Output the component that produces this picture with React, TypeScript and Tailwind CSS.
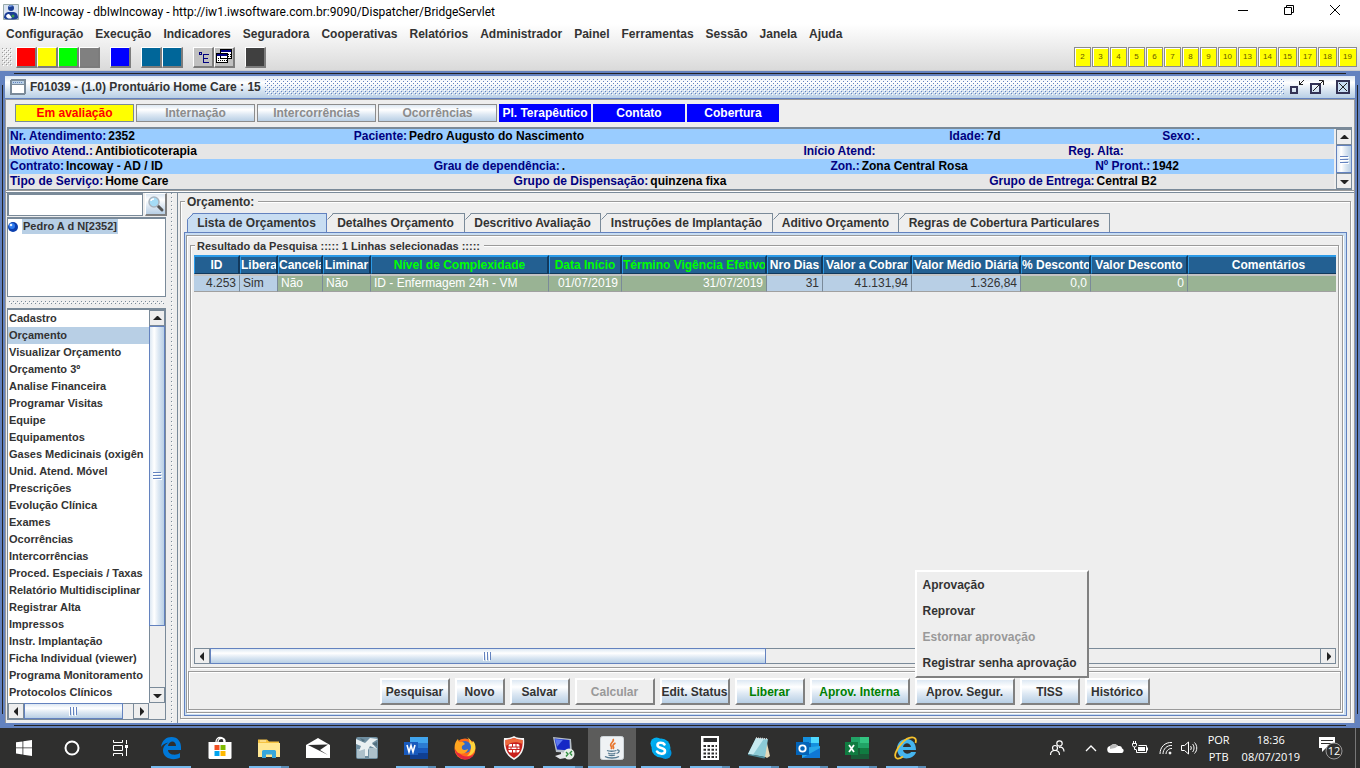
import { useState } from 'react';
import type { ReactNode } from 'react';

const metal = 'bg-[linear-gradient(to_bottom,#dde8f3,#fff_30%,#dde8f3_60%,#b8cfe5)]';
const metalSide = 'bg-[linear-gradient(to_right,#dde8f3,#fff_30%,#dde8f3_60%,#b8cfe5)]';
const etched = 'border border-[#9a9a9a] shadow-[1px_1px_0_#fff,inset_1px_1px_0_#fff]';

const menus = [
  'Configuração', 'Execução', 'Indicadores', 'Seguradora', 'Cooperativas', 'Relatórios',
  'Administrador', 'Painel', 'Ferramentas', 'Sessão', 'Janela', 'Ajuda',
];

const badges = [2, 3, 4, 5, 6, 7, 8, 9, 10, 13, 14, 15, 17, 18, 19];

const infoRows = [
  {
    cols: 'grid-cols-[344fr_596fr_213fr_172fr] bg-[#99ccff]',
    items: [['Nr. Atendimento:', '2352'], ['Paciente:', 'Pedro Augusto do Nascimento'], ['Idade:', '7d'], ['Sexo:', '.']],
  },
  {
    cols: 'grid-cols-[794fr_265fr_266fr] bg-[#e6e6e6]',
    items: [['Motivo Atend.:', 'Antibioticoterapia'], ['Início Atend:', ''], ['Reg. Alta:', '']],
  },
  {
    cols: 'grid-cols-[424fr_397fr_265fr_239fr] bg-[#99ccff]',
    items: [['Contrato:', 'Incoway - AD / ID'], ['Grau de dependência:', '.'], ['Zon.:', 'Zona Central Rosa'], ['Nº Pront.:', '1942']],
  },
  {
    cols: 'grid-cols-[504fr_476fr_345fr] bg-[#e6e6e6]',
    items: [['Tipo de Serviço:', 'Home Care'], ['Grupo de Dispensação:', 'quinzena fixa'], ['Grupo de Entrega:', 'Central B2']],
  },
];

const sections = [
  'Cadastro', 'Orçamento', 'Visualizar Orçamento', 'Orçamento 3º', 'Analise Financeira', 'Programar Visitas',
  'Equipe', 'Equipamentos', 'Gases Medicinais (oxigên', 'Unid. Atend. Móvel', 'Prescrições', 'Evolução Clínica',
  'Exames', 'Ocorrências', 'Intercorrências', 'Proced. Especiais / Taxas', 'Relatório Multidisciplinar',
  'Registrar Alta', 'Impressos', 'Instr. Implantação', 'Ficha Individual (viewer)', 'Programa Monitoramento',
  'Protocolos Clínicos',
];

const tabs = [
  { name: 'Lista de Orçamentos', width: 'w-[140px]' },
  { name: 'Detalhes Orçamento', width: 'w-[138px]' },
  { name: 'Descritivo Avaliação', width: 'w-[136px]' },
  { name: 'Instruções de Implantação', width: 'w-[172px]' },
  { name: 'Aditivo Orçamento', width: 'w-[126px]' },
  { name: 'Regras de Cobertura Particulares', width: 'w-[211px]' },
];

const columns = [
  { name: 'ID', width: 'w-[46px]', value: '4.253', right: true, blue: true },
  { name: 'Libera', width: 'w-[38px]', value: 'Sim', blue: true },
  { name: 'Cancela', width: 'w-[45px]', value: 'Não' },
  { name: 'Liminar', width: 'w-[48px]', value: 'Não' },
  { name: 'Nível de Complexidade', width: 'w-[178px]', value: 'ID - Enfermagem 24h - VM', green: true },
  { name: 'Data Início', width: 'w-[73px]', value: '01/07/2019', right: true, green: true },
  { name: 'Término Vigência Efetivo', width: 'w-[145px]', value: '31/07/2019', right: true, green: true },
  { name: 'Nro Dias', width: 'w-[56px]', value: '31', right: true, blue: true },
  { name: 'Valor a Cobrar', width: 'w-[89px]', value: '41.131,94', right: true, blue: true },
  { name: 'Valor Médio Diária', width: 'w-[109px]', value: '1.326,84', right: true, blue: true },
  { name: '% Desconto', width: 'w-[70px]', value: '0,0', right: true },
  { name: 'Valor Desconto', width: 'w-[97px]', value: '0', right: true },
  { name: 'Comentários', width: '', value: '' },
];

// dotted grip used on title bars and dividers
function Bumps({ id, color }: { id: string; color: string }) {
  return (
    <svg className="block h-full w-full" shapeRendering="crispEdges" aria-hidden="true">
      <defs>
        <pattern id={id} width="4" height="4" patternUnits="userSpaceOnUse">
          <rect width="1" height="1" fill={color} />
          <rect x="1" y="1" width="1" height="1" fill="#fff" />
          <rect x="2" y="2" width="1" height="1" fill={color} />
          <rect x="3" y="3" width="1" height="1" fill="#fff" />
        </pattern>
      </defs>
      <rect width="100%" height="100%" fill={`url(#${id})`} />
    </svg>
  );
}

const arrows = { up: 'M0 6 4 2h1l4 4z', down: 'M0 3h9L5 7H4z', left: 'M6 0v9L2 5V4z', right: 'M3 0v9l4-4V4z' };

function ArrowButton({ dir }: { dir: keyof typeof arrows }) {
  return (
    <button aria-label={dir} className="flex size-4 shrink-0 items-center justify-center border border-[#7a8a99] bg-[#eee]">
      <svg width="9" height="9" fill="#222"><path d={arrows[dir]} /></svg>
    </button>
  );
}

function Grip({ side }: { side?: boolean }) {
  return (
    <svg width="9" height="9" className={side ? '' : 'rotate-90'} shapeRendering="crispEdges">
      <path d="M0 1.500h8M0 4.500h8M0 7.500h8" stroke="#6382bf" />
      <path d="M1 2.500h8M1 5.500h8M1 8.500h8" stroke="#fff" />
    </svg>
  );
}

function ToolButton({ color, label, children }: { color: string; label: string; children?: ReactNode }) {
  return (
    <button aria-label={label} className={`flex size-[21px] items-center justify-center border-t border-r-2 border-b-2 border-l border-t-white border-r-[#7c7c7c] border-b-[#7c7c7c] border-l-white ${color}`}>
      {children}
    </button>
  );
}

function ActionButton({ width, className = 'text-[#333]', disabled, children }: { width: string; className?: string; disabled?: boolean; children: ReactNode }) {
  return (
    <button
      disabled={disabled}
      className={`h-[27px] whitespace-nowrap border-2 border-t-white border-l-white border-r-[#808080] border-b-[#808080] ${disabled ? 'bg-[#eee]' : metal} ${width} ${className}`}
    >
      {children}
    </button>
  );
}

function EtchedBox({ title, className, children }: { title: string; className: string; children: ReactNode }) {
  return (
    <section className={`relative flex min-h-0 min-w-0 flex-1 flex-col ${etched} ${className}`}>
      <h2 className="absolute -top-2 left-1 bg-[#eee] px-0.5 pr-1 leading-4">{title}</h2>
      {children}
    </section>
  );
}

function TitleBar() {
  return (
    <header className="flex h-6 items-center bg-white pl-[3px]">
      <svg width="16" height="16" viewBox="0 0 16 16">
        <path fill="#d9e3f2" stroke="#9aa" d="M.5.5h15v15H.5z" />
        <circle cx="8" cy="4" r="3" fill="#1c3f95" />
        <path fill="#1c3f95" d="M1 14c0-4 2-6 5-6h4c3 0 5 2 5 6-1 2-13 2-14 0z" />
        <path fill="#fff" d="M3 12c2-3 3-2 4-1l2 3c-2 1-5 1-6-2z" />
        <circle cx="10" cy="12" r="1.5" fill="#3c9b4a" />
        <path fill="#8fb5ef" d="M6 3c0-2 3-2 4-1z" />
      </svg>
      <h1 className="ml-1 flex-1 font-[Roboto,sans-serif] text-xs font-normal text-black">
        IW-Incoway - dbIwIncoway - http://iw1.iwsoftware.com.br:9090/Dispatcher/BridgeServlet
      </h1>
      <div className="mr-0.5 flex pb-1">
        {['M1 6.500h10', 'M1.500 3.500h7v7h-7zM3.500 3.500v-2h7v7h-2', 'M1 1l10 10M11 1 1 11'].map((d, i) => (
          <button key={d} aria-label={['Minimizar', 'Restaurar', 'Fechar'][i]} className="flex h-5 w-[46px] items-center justify-center">
            <svg width="12" height="12" fill="none" stroke="#000"><path d={d} /></svg>
          </button>
        ))}
      </div>
    </header>
  );
}

function ToolBar() {
  return (
    <div className="flex h-[26px] items-center gap-2.5 pr-[3px] pl-0.5">
      <div className="flex items-center gap-1">
        <div className="h-[18px] w-2.5"><Bumps id="grip-toolbar" color="#999" /></div>
        <div className="flex">
          <ToolButton label="Vermelho" color="bg-[#ff0000]" />
          <ToolButton label="Amarelo" color="bg-[#ffff00]" />
          <ToolButton label="Verde" color="bg-[#00ff00]" />
          <ToolButton label="Cinza" color="bg-[#808080]" />
        </div>
      </div>
      <ToolButton label="Azul" color="bg-[#0000ff]" />
      <div className="flex">
        <ToolButton label="Anterior" color="bg-[#006699]" />
        <ToolButton label="Próximo" color="bg-[#006699]" />
      </div>
      <div className="flex">
        <ToolButton label="Árvore" color="bg-[#c0c0c0]">
          <svg width="14" height="14" fill="none" stroke="#000080" shapeRendering="crispEdges">
            <path d="M3.500 2.500h2v2h-2zM7.500 4v9M7.500 4.500h5M7.500 8.500h4M7.500 12.500h5" />
          </svg>
        </ToolButton>
        <ToolButton label="Janelas" color="bg-[#c0c0c0]">
          <svg width="16" height="15" shapeRendering="crispEdges">
            <path fill="#fff" stroke="#000" d="M4.500.5h11v9h-11zM.500 4.500h11v9H.500z" />
            <path fill="#000080" d="M5 1h10v2H5zM1 5h10v2H1z" />
            <path stroke="#000" strokeDasharray="1 1" d="M2 9.500h9M2 11.500h9M12 5.500h3M12 7.500h3" />
          </svg>
        </ToolButton>
      </div>
      <ToolButton label="Sair" color="bg-[#404040]" />
      <div className="ml-auto flex gap-px">
        {badges.map((n) => (
          <button key={n} className={`h-5 border border-[#8c8c8c] bg-[#ffff00] text-[8px] leading-4 font-normal text-[#665500] shadow-[inset_1px_1px_0_#fff] ${n > 9 ? 'w-[19px]' : 'w-[17px]'}`}>{n}</button>
        ))}
      </div>
    </div>
  );
}

function FrameTitle() {
  return (
    <div className={`flex h-[23px] items-center border-b border-[#6382bf] pr-1 pl-[5px] ${metal}`}>
      <svg width="16" height="16" shapeRendering="crispEdges">
        <rect x="1" y="1" width="14" height="14" rx="1" fill="#fff" stroke="#7a8a99" strokeWidth="2" />
        <path fill="#b8cfe5" d="M2 2h12v3H2z" />
        <path stroke="#7a8a99" d="M2 5.500h12" />
        <path stroke="#6382bf" strokeDasharray="1 1" d="M3 3.500h10" />
      </svg>
      <h2 className="mr-1 ml-1 whitespace-nowrap">F01039 - (1.0) Prontuário Home Care : 15</h2>
      <div className="h-4 flex-1"><Bumps id="grip-title" color="#6382bf" /></div>
      <div className="flex gap-1 pl-1.5">
        <button aria-label="Minimizar janela">
          <svg width="16" height="16" fill="none" stroke="#222" shapeRendering="crispEdges">
            <path d="M1 8h6v6H1z" stroke="#335" strokeWidth="2" />
            <path d="M9 5.500h4M9.500 2v4M10 5l4-4" />
          </svg>
        </button>
        <button aria-label="Maximizar janela">
          <svg width="16" height="16" fill="none" stroke="#222">
            <path d="M1 5h9v9H1z" stroke="#335" strokeWidth="2" />
            <path d="M3 12l10-10M9 1.500h4.500V6" />
          </svg>
        </button>
        <button aria-label="Fechar janela" className="ml-1.5">
          <svg width="15" height="15" fill="#c8ddf2" stroke="#222">
            <path d="M1 1h12v12H1z" strokeWidth="2" stroke="#335" />
            <path d="M3 3l8 8M11 3l-8 8" />
          </svg>
        </button>
      </div>
    </div>
  );
}

function StatusRow() {
  return (
    <div className="flex gap-0.5 pt-1 pr-2 pb-[5px] pl-[9px]">
      <button className="h-[18px] w-[119px] border border-[#7a8a99] bg-[#ffff00] leading-4 text-[#ff0000]">Em avaliação</button>
      {['Internação', 'Intercorrências', 'Ocorrências'].map((name) => (
        <button key={name} className={`h-[18px] w-[119px] border border-[#8c8c8c] leading-4 text-[#8c8c8c] ${metal}`}>{name}</button>
      ))}
      {['Pl. Terapêutico', 'Contato', 'Cobertura'].map((name) => (
        <button key={name} className="h-[18px] w-[92px] whitespace-nowrap bg-[#0000ff] leading-4 text-white">{name}</button>
      ))}
    </div>
  );
}

function PatientInfo() {
  return (
    <div className="mr-0.5 ml-px flex border-t-2 border-b border-l-2 border-[#7a8a99]">
      <div className="min-w-0 flex-1 text-black">
        {infoRows.map((row) => (
          <dl key={row.cols} className={`grid h-[15px] pl-px leading-[15px] whitespace-nowrap ${row.cols}`}>
            {row.items.map(([label, value]) => (
              <div key={label} className="flex gap-0.5">
                <dt className="text-[#000080]">{label}</dt>
                <dd>{value}</dd>
              </div>
            ))}
          </dl>
        ))}
      </div>
      <div className="ml-0.5 flex w-4 flex-col bg-[#eee]">
        <ArrowButton dir="up" />
        <div className={`flex flex-1 items-center justify-center border border-[#6382bf] ${metalSide}`}><Grip side /></div>
        <ArrowButton dir="down" />
      </div>
    </div>
  );
}

function Sidebar() {
  const [active, setActive] = useState('Orçamento');
  return (
    <aside className="flex w-[161px] shrink-0 flex-col pb-[3px] pl-px text-[11px]">
      <div className="flex gap-0.5">
        <input aria-label="Pesquisar paciente" className="h-[23px] min-w-0 flex-1 border border-t-2 border-l-2 border-[#7a8a99] bg-white px-1 outline-none" />
        <button aria-label="Buscar" className={`flex h-[23px] w-[22px] items-center justify-center border border-r-2 border-b-2 border-t-white border-r-[#808080] border-b-[#808080] border-l-white ${metal}`}>
          <svg width="18" height="18" fill="none">
            <path stroke="#555" strokeWidth="3" strokeLinecap="round" d="m11 11 4 4" />
            <circle cx="7" cy="7" r="5" fill="#a5dcf7" stroke="#a9b4bf" strokeWidth="1.500" />
            <path stroke="#fff" strokeWidth="1.500" d="M4 6c0-1 1-2 3-2" />
          </svg>
        </button>
      </div>
      <div className="mt-px mr-px h-20 border border-t-2 border-[#7a8a99] bg-white">
        <div className="flex items-center gap-[3px]">
          <svg width="11" height="12">
            <circle cx="5" cy="6" r="5" fill="#0b3fae" />
            <circle cx="4" cy="5" r="3" fill="#2f7cf0" />
            <circle cx="3" cy="4" r="1.300" fill="#e6f1ff" />
          </svg>
          <span className="bg-[#b8cfe5] px-px leading-[15px]">Pedro A d N[2352]</span>
        </div>
      </div>
      <div className="h-[11px] px-0.5 py-1"><Bumps id="grip-side" color="#7a8a99" /></div>
      <div className="mr-px flex min-h-0 flex-1 flex-col border border-t-2 border-[#7a8a99]">
        <div className="flex min-h-0 flex-1">
          <ul className="min-w-0 flex-1 overflow-hidden bg-white">
            {sections.map((name) => (
              <li key={name}>
                <button
                  onClick={() => setActive(name)}
                  className={`block h-[17px] w-full pl-px text-left leading-[17px] whitespace-nowrap ${name === active ? 'bg-[#b8cfe5]' : ''}`}
                >
                  {name}
                </button>
              </li>
            ))}
          </ul>
          <div className="flex w-4 flex-col bg-[#eee]">
            <ArrowButton dir="up" />
            <div className={`flex flex-[301] items-center justify-center border border-[#6382bf] ${metalSide}`}><Grip side /></div>
            <div className="flex-[62] border-l border-[#7a8a99]" />
            <ArrowButton dir="down" />
          </div>
        </div>
        <div className="flex h-4 bg-[#eee]">
          <ArrowButton dir="left" />
          <div className={`flex flex-[101] items-center justify-center border border-[#6382bf] ${metal}`}><Grip /></div>
          <div className="flex-[10] border-t border-[#7a8a99]" />
          <ArrowButton dir="right" />
          <div className="w-4" />
        </div>
      </div>
    </aside>
  );
}

function BudgetTable() {
  return (
    <div className="min-h-0 flex-1 overflow-hidden">
      <table className="w-full min-w-[1156px] table-fixed border-separate border-spacing-0 text-left">
        <thead>
          <tr>
            {columns.map((c) => (
              <th key={c.name} scope="col" className={`border border-t-2 border-r-2 border-t-[#2c9be8] border-r-[#12395c] border-b-[#12395c] border-l-[#2c9be8] bg-[#236092] p-0 text-center ${c.green ? 'text-[#00ff00]' : 'text-white'} ${c.width}`}>
                <div className="flex h-4 justify-center-safe overflow-hidden leading-4 whitespace-nowrap">{c.name}</div>
              </th>
            ))}
          </tr>
        </thead>
        <tbody>
          <tr>
            {columns.map((c) => (
              <td key={c.name} className={`h-[18px] overflow-hidden border-t-2 border-r border-b border-t-[#c4c4c4] border-r-[#7a8a99] border-b-[#a0a0a0] px-[3px] py-0 leading-[15px] font-normal whitespace-nowrap ${c.right ? 'text-right' : ''} ${c.blue ? 'bg-[#b8cfe5] text-[#333]' : 'bg-[#99b394] text-white'}`}>
                {c.value}
              </td>
            ))}
          </tr>
        </tbody>
      </table>
    </div>
  );
}

function ActionBar() {
  return (
    <div className={`mx-px mt-[3px] mb-0.5 flex justify-center gap-[5px] pt-1.5 pb-1 ${etched}`}>
      <ActionButton width="w-[70px]">Pesquisar</ActionButton>
      <ActionButton width="w-[50px]">Novo</ActionButton>
      <ActionButton width="w-[60px]">Salvar</ActionButton>
      <ActionButton width="w-[80px]" className="text-[#999]" disabled>Calcular</ActionButton>
      <ActionButton width="w-[70px]">Edit. Status</ActionButton>
      <ActionButton width="w-[70px]" className="text-[#008000]">Liberar</ActionButton>
      <ActionButton width="w-[100px]" className="text-[#008000]">Aprov. Interna</ActionButton>
      <div className="relative">
        <ActionButton width="w-[100px]">Aprov. Segur.</ActionButton>
        <menu className="absolute bottom-full left-0 z-10 w-[174px] border-2 border-t-white border-r-[#808080] border-b-[#808080] border-l-white bg-[#eee]">
          {['Aprovação', 'Reprovar', 'Estornar aprovação', 'Registrar senha aprovação'].map((name) => (
            <li key={name}>
              <button disabled={name.startsWith('Estornar')} className="block h-[26px] w-full pl-1.5 text-left whitespace-nowrap disabled:text-[#999]">{name}</button>
            </li>
          ))}
        </menu>
      </div>
      <ActionButton width="w-[60px]">TISS</ActionButton>
      <ActionButton width="w-[65px]">Histórico</ActionButton>
    </div>
  );
}

function BudgetPanel() {
  const [tab, setTab] = useState(tabs[0].name);
  return (
    <main className="flex min-w-0 flex-1 flex-col border-l border-[#7a8a99] pt-2 pr-[3px] pb-1 pl-0.5">
      <EtchedBox title="Orçamento:" className="px-[3px] pt-[11px] pb-0.5">
        <div role="tablist" className="flex pl-[3px]">
          {tabs.map((t) => {
            const on = t.name === tab;
            return (
              <button
                key={t.name}
                role="tab"
                aria-selected={on}
                onClick={() => setTab(t.name)}
                className={`relative h-[19px] border-t border-r whitespace-nowrap ${t.width} ${on ? 'border-[#6382bf] bg-[#c8ddf2]' : 'border-[#7a8a99]'}`}
              >
                <svg className="absolute -top-px left-0" width="7" height="19" fill="none">
                  <path fill="#eee" d="M0 0h6L0 6z" />
                  <path stroke={on ? '#6382bf' : '#7a8a99'} d={on ? 'M6.500.5l-6 6V19' : 'M6.500.5l-6 6'} />
                </svg>
                {t.name}
              </button>
            );
          })}
        </div>
        <div className="flex min-h-0 flex-1 flex-col border border-[#6382bf] bg-[#c8ddf2] pt-0.5 pr-[3px] pb-0.5 pl-px">
          <div className={`flex min-h-0 flex-1 flex-col bg-[#eee] ${etched}`}>
            <EtchedBox title="Resultado da Pesquisa ::::: 1 Linhas selecionadas :::::" className="mx-[3px] mt-[9px] pt-[9px] pr-0.5 pb-[3px] pl-[3px] [&>h2]:text-[11px]">
              <BudgetTable />
              <div className="flex h-4 border-t border-b border-[#7a8a99]">
                <div className="-my-px"><ArrowButton dir="left" /></div>
                <div className={`-my-px flex flex-[555] items-center justify-center border border-[#6382bf] ${metal}`}><Grip /></div>
                <div className="flex-[556]" />
                <div className="-my-px"><ArrowButton dir="right" /></div>
              </div>
            </EtchedBox>
            <ActionBar />
          </div>
        </div>
      </EtchedBox>
    </main>
  );
}

const apps: { name: string; state: 'idle' | 'open' | 'many' | 'active'; icon: ReactNode }[] = [
  {
    name: 'Edge', state: 'open',
    icon: <path fill="#0078d7" d="M2 11C3 4 7.500 1 12.500 1 19 1 22 6 22 11v3H9c0 5 8 6 12 3v4.500C15 25 4 23 4 14.500 4 11 6.500 8 9.500 6.500 5.500 7 3.500 9 2 11zM9 10h8c0-6-7-6-8 0z" />,
  },
  {
    name: 'Store', state: 'idle',
    icon: (
      <>
        <path fill="none" stroke="#fff" strokeWidth="1.300" d="M8 6c0-6 8-6 8 0M10 6c0-5 8-5 7 0" />
        <path fill="#fff" d="M.5 6h23v15.500a1.500 1.500 0 0 1-1.500 1.500H2A1.500 1.500 0 0 1 .5 21.500z" />
        <path fill="#f25022" d="M6.500 9h5v5h-5z" /><path fill="#7fba00" d="M12.500 9h5v5h-5z" />
        <path fill="#00a4ef" d="M6.500 15h5v5h-5z" /><path fill="#ffb900" d="M12.500 15h5v5h-5z" />
      </>
    ),
  },
  {
    name: 'Explorador', state: 'many',
    icon: (
      <>
        <path fill="#f5c242" d="M1 3.500h9l2 2h10v4H1z" /><path fill="#ffe793" d="M1 7h22v14H1z" />
        <path fill="#fff3c4" d="M3 4.500h6v1H3z" />
        <path fill="#35a7dc" d="M5 22v-6.500A1.500 1.500 0 0 1 6.500 14h11a1.500 1.500 0 0 1 1.500 1.500V22h-4v-3.500h-6V22z" />
      </>
    ),
  },
  {
    name: 'Email', state: 'idle',
    icon: <><path fill="#fff" d="M0 9 12 2l12 7v13H0z" /><path fill="#2d2d2d" d="m2 9 20-.5L14 14l8 5L2 9z" /></>,
  },
  {
    name: 'Imagem', state: 'idle',
    icon: (
      <>
        <rect x="1" y="1" width="22" height="22" rx="2" fill="#6f8ea0" />
        <path fill="#adc1cb" d="M2 13h8v9H2zM14 12h8v10h-8z" />
        <path fill="#e9f0f2" d="m1 3 9 4 5-5 8 1-6 4 5 6-7-3-2 4v6h-3v-7l-6 2 2-5-5-2z" />
        <path fill="#52707f" d="m5 2 5 2-2 2zM17 8l5-2v4z" />
      </>
    ),
  },
  {
    name: 'Word', state: 'many',
    icon: (
      <>
        <path fill="#41a5ee" d="M6 1h18v6H6z" /><path fill="#2b7cd3" d="M6 7h18v5H6z" />
        <path fill="#185abd" d="M6 12h18v6H6z" /><path fill="#103f91" d="M6 17h18v6H6z" />
        <path fill="#185abd" d="M0 6h14v13H0z" />
        <path fill="none" stroke="#fff" strokeWidth="1.600" d="m3 9 2 7 2-6.500L9 16l2-7" />
      </>
    ),
  },
  {
    name: 'Firefox', state: 'open',
    icon: (
      <>
        <circle cx="12" cy="13" r="10.500" fill="#ff6a1c" />
        <path fill="#e5283f" d="M2 10c-1 7 4 13 10 13.500 4 0 7-2 9-5-5 3-12 3-15-2C4 14 5 10 6 8z" />
        <path fill="#ffd43b" d="M14 1c2 2 3 3 2 7 3 4 2 9-2 12 8 0 11-10 6-15l-1 2c-1-3-3-5-5-6z" />
        <circle cx="12" cy="11" r="6" fill="#3468c9" />
        <path fill="#ffa51f" d="M2 13c-1-5 1-8 3-10l1 3 4 0 2 2-3 2c-1 4 2 5 6 3-1 5-8 6-11 3z" />
      </>
    ),
  },
  {
    name: 'Forticlient', state: 'open',
    icon: (
      <>
        <path fill="#f5f5f5" d="M12 0c3 2 6 2 10 2 1 10-1 17-10 22C3 19 1 12 2 2c4 0 7 0 10-2z" />
        <path fill="#c8201c" d="M12 2c3 1 5 2 8.500 2 .5 8-1 14-8.500 18C4.500 18 3 12 3.500 4 7 4 9 3 12 2z" />
        <path fill="#ef6a3c" d="M12 2c3 1 5 2 8.500 2v4C14 5 9 6 3.500 10V4C7 4 9 3 12 2z" />
        <rect x="6.500" y="8" width="11" height="8.500" rx="2" fill="#fff" />
        <path stroke="#c8201c" strokeWidth="1" d="M6 11h12M6 13.500h12M10.500 8v3M14 8v3M9 11v2.500M15 11v2.500M10.500 13.500V17M14 13.500V17" />
      </>
    ),
  },
  {
    name: 'Acesso remoto', state: 'many',
    icon: (
      <>
        <path fill="#b6bfc8" d="m2 1 18 2 1 14-16-1z" /><path fill="#1528c5" d="m3.500 2.500 15 1.500.5 10.500-13-1z" />
        <path fill="#5b77f0" d="m4 3 8 .7-6 7z" /><path fill="#e5e7ea" d="m10 16 5 .5V19l5 2-11 2-5-3 6-2z" />
        <circle cx="18" cy="18" r="5.500" fill="#e8eee8" />
        <path fill="none" stroke="#2f8f3f" strokeWidth="1.400" d="m15 16 2 2-2 2.500M21 15l-2 2 2 2.500" />
      </>
    ),
  },
  {
    name: 'Java', state: 'active',
    icon: (
      <>
        <rect x=".5" y=".5" width="23" height="23" rx="2" fill="#eff2f4" stroke="#cfd6da" />
        <path fill="none" stroke="#e8762d" strokeWidth="1.700" d="M13 3c2 3-4 4-2 7 1 1.500 1 2 0 3M15.500 7c-3 1.500-3 3-2 4 .5 1 0 1.500-.5 2" />
        <path fill="none" stroke="#54788f" strokeWidth="1.300" d="M7 14.500c2 1 7 1 9.500 0M8 17c2 1 5.500 1 7.500 0M8.500 19c2 .8 4.500.8 6.500 0M5 20.500c3 2 11 2 14 0M17 14c3-.5 3 2.500-.5 3.500" />
      </>
    ),
  },
  {
    name: 'Skype', state: 'open',
    icon: (
      <>
        <circle cx="12" cy="12" r="9.500" fill="#00aff0" /><circle cx="7.500" cy="7.500" r="6" fill="#00aff0" />
        <circle cx="16.500" cy="17" r="6" fill="#0095e0" /><circle cx="12" cy="12" r="8.500" fill="#00a8ec" />
        <path fill="none" stroke="#fff" strokeWidth="2.600" strokeLinecap="round" d="M15.500 8.500C14 6 8.500 6 8.500 9c0 4 7.500 2 7.500 6 0 3.500-6 3.500-8 .5" />
      </>
    ),
  },
  {
    name: 'Calculadora', state: 'many',
    icon: (
      <>
        <path fill="#fff" d="M3 0h18v24H3z" /><path fill="#2d2d2d" d="M5.500 2h13.500v4H5.500z" />
        <path stroke="#2d2d2d" strokeWidth="2" strokeDasharray="2.500 1.500" d="M5.500 10H19M5.500 13.700H19M5.500 17.400H19M5.500 21H19" />
      </>
    ),
  },
  {
    name: 'Bloco de notas', state: 'many',
    icon: (
      <>
        <path fill="#e7d9b8" d="m19 3 4 17-3 2-5-3z" /><path fill="#8ccbd6" d="m9 2 12 1-3 18-17-3z" />
        <path fill="#c6eaf0" d="m9 2 8 .7L6 18.700 1 18z" /><path fill="#4d8c9a" d="m1 18 17 3-.5 1.500L1 19z" />
        <path stroke="#ddd" strokeWidth="1.500" strokeDasharray="1 1" d="m9 2 12 1" />
      </>
    ),
  },
  {
    name: 'Outlook', state: 'many',
    icon: (
      <>
        <path fill="#1490df" d="M7 1h16v12H7z" /><path fill="#50d9ff" d="M15 1h8v6h-8z" /><path fill="#0f5ea8" d="M7 7h8v6H7z" />
        <path fill="#28a8ea" d="m6 12 18-2v12H6z" /><path fill="#0f78d4" d="m6 22 18-10v10z" />
        <path fill="#0364b8" d="M0 6h13v13H0z" /><circle cx="6.500" cy="12.500" r="3.200" fill="none" stroke="#fff" strokeWidth="1.800" />
      </>
    ),
  },
  {
    name: 'Excel', state: 'many',
    icon: (
      <>
        <path fill="#21a366" d="M6 1h9v11H6z" /><path fill="#33c481" d="M15 1h9v6h-9z" /><path fill="#21a366" d="M15 7h9v5h-9z" />
        <path fill="#185c37" d="M6 12h18v11H6z" /><path fill="#107c41" d="M15 12h9v6h-9zM0 6h13v13H0z" />
        <path stroke="#fff" strokeWidth="1.800" d="m4 9 5 7M9 9l-5 7" />
      </>
    ),
  },
  {
    name: 'Internet Explorer', state: 'many',
    icon: (
      <>
        <path fill="#45b5ee" d="M12.500 3C19 3 22 8 22 14H9c1 5 7 4 8 2h5c-2 8-18 10-19-3C3 7 7 3 12.500 3zM9 11h8c-1-5-7-5-8 0z" />
        <path fill="none" stroke="#f6c22d" strokeWidth="1.800" d="M21.500 7C24-1 14 0 8 7 2 13-1 21 3 22.500c2 .7 4-.5 6-2" />
      </>
    ),
  },
];

function Taskbar() {
  return (
    <footer className="flex h-10 shrink-0 items-stretch bg-[#2f2f2e] font-['Open_Sans',sans-serif] font-normal text-white">
      <button aria-label="Iniciar" className="flex w-12 items-center justify-center">
        <svg width="16" height="16" fill="#fff"><path d="m0 2.300 6.500-.9v6.100H0zM7.300 1.300 16 0v7.500H7.300zM0 8.300h6.500v6.200L0 13.600zM7.300 8.300H16V16l-8.700-1.300z" /></svg>
      </button>
      <button aria-label="Pesquisar no computador" className="flex w-12 items-center justify-center">
        <svg width="16" height="16"><circle cx="8" cy="8" r="6.500" fill="none" stroke="#fff" strokeWidth="2" /></svg>
      </button>
      <button aria-label="Tarefas" className="mr-[3px] flex w-12 items-center justify-center">
        <svg width="17" height="16" fill="none" stroke="#fff"><path d="M1.500 0v2.500h9V0M1.500 16v-2.500h9V16M1.500 5.500h9v5h-9zM14.500 0v4M14.500 8v8" /><path fill="#fff" stroke="none" d="M13 5h3v3h-3z" /></svg>
      </button>
      {apps.map((app) => (
        <button key={app.name} aria-label={app.name} className={`mr-px flex w-12 flex-col items-center ${app.state === 'active' ? 'bg-[#5c5c5b]' : ''}`}>
          <svg className="mt-2 mb-1.5" width="24" height="24" viewBox="0 0 24 24">{app.icon}</svg>
          {app.state !== 'idle' && (
            <span className={`flex h-0.5 justify-end bg-[#76b9ed] ${app.state === 'active' ? 'w-full' : 'w-10'}`}>
              {app.state === 'many' && <span className="w-2 bg-[#5a8cb5]" />}
            </span>
          )}
        </button>
      ))}
      <div className="ml-auto flex items-center">
        <svg className="mr-5" width="16" height="16" fill="none" stroke="#fff" strokeWidth="1.200">
          <circle cx="10.500" cy="3.500" r="2.700" /><circle cx="6" cy="8" r="2.500" /><path d="M1.500 15c0-6 9-6 9 0M10 7.500c3-1 5 1 5 4" />
        </svg>
        <svg className="mr-2.5" width="12" height="8" fill="none" stroke="#fff" strokeWidth="1.300"><path d="m1 7 5-5 5 5" /></svg>
        <svg className="mr-2" width="17" height="11" fill="#fff"><path d="M4 10a3.500 3.500 0 0 1-.5-7C5 .5 9.500.5 11 3c3-.5 4 1 4 2.500 2.500.5 2 4.500-.5 4.500z" /><path fill="#bbb" d="M3 3C5 .5 9.500.5 11 3L8 5 3 6z" /></svg>
        <svg className="mr-2.5" width="17" height="14" fill="none" stroke="#fff"><path d="M6.500 4.500h8v7h-10V9M15.500 6.500v3M.500 2.500h4v2c0 2-4 2-4 0zM1.500 2V0M3.500 2V0M2.500 6v2.500h2" /><path fill="#fff" stroke="none" d="M6 6h7v4H6z" /></svg>
        <svg className="mr-2" width="14" height="14" fill="none" stroke="#fff"><path d="M1 13C1 6 6 1 13 1.500M4 13c0-5 4-9 9-8.500M7 13c0-3 3-6 6-5.500" /><circle cx="11" cy="12" r="1" fill="#fff" /></svg>
        <svg className="mr-2.5" width="17" height="14" fill="none" stroke="#fff"><path d="M.500 4.500h3L7.500 1v12l-4-3.500h-3zM9.500 5c1 1 1 3 0 4M11.500 3c2 2 2 6 0 8M13.500 1.500c3 3 3 8 0 11" /></svg>
        <div className="mr-3 text-center text-[11px] leading-[17px]"><p>POR</p><p>PTB</p></div>
        <div className="mr-[18px] text-center text-[11px] leading-[17px]"><p>18:36</p><p>08/07/2019</p></div>
        <button aria-label="Notificações" className="relative mr-3 h-6 w-[25px]">
          <svg width="25" height="24"><path fill="#fff" d="M1 1h16v11H8l-4 4v-4H1z" /><path stroke="#2f2f2e" d="M3 4.500h12M3 7.500h12" /><circle cx="16" cy="15" r="8" fill="#2f2f2e" stroke="#999" /></svg>
          <span className="absolute top-2 left-2 w-4 text-center text-[11px] leading-[14px]">12</span>
        </button>
        <span className="h-10 w-[5px] border-l border-[#777]" />
      </div>
    </footer>
  );
}

export default function App() {
  return (
    <div className="flex h-screen flex-col overflow-hidden bg-[#eee] font-['Liberation_Sans',Arial,sans-serif] text-xs font-bold text-[#333]">
      <TitleBar />
      <div className="border-b border-[#ccc] bg-[linear-gradient(to_bottom,#fff,#dadada)]">
        <nav className="flex h-5 items-center gap-3 px-1.5">
          {menus.map((m) => <button key={m}>{m}</button>)}
        </nav>
        <ToolBar />
      </div>
      <div className="relative flex min-h-0 flex-1 flex-col bg-[#6382bf] px-[5px] py-[5px]">
        <span className="absolute inset-x-3.5 inset-y-0.5 border-y border-[#222]" />
        <span className="absolute inset-x-0.5 inset-y-3.5 border-x border-[#222]" />
        <div className="relative flex min-h-0 flex-1 flex-col bg-[#eee]">
          <FrameTitle />
          <div className="flex min-h-0 flex-1 flex-col border-x border-t border-[#9a9a9a]">
            <StatusRow />
            <PatientInfo />
            <div className="h-[3px] border-y border-t-[#9a9a9a] border-b-[#7a8a99] bg-white" />
            <div className="flex min-h-0 flex-1">
              <Sidebar />
              <div className="w-2.5 px-1"><Bumps id="grip-split" color="#7a8a99" /></div>
              <BudgetPanel />
            </div>
          </div>
        </div>
      </div>
      <Taskbar />
    </div>
  );
}
